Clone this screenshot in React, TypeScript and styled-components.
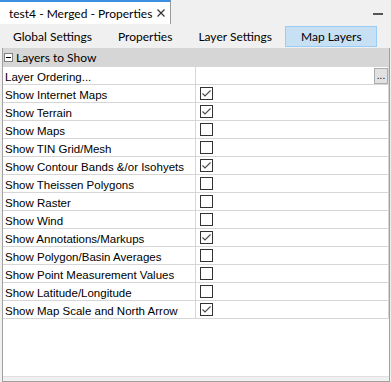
import React from 'react';
import styled, { createGlobalStyle } from 'styled-components';

interface LayerRow {
  label: string;
  checked: boolean;
}

const ROWS: LayerRow[] = [
  { label: 'Show Internet Maps', checked: true },
  { label: 'Show Terrain', checked: true },
  { label: 'Show Maps', checked: false },
  { label: 'Show TIN Grid/Mesh', checked: false },
  { label: 'Show Contour Bands &/or Isohyets', checked: true },
  { label: 'Show Theissen Polygons', checked: false },
  { label: 'Show Raster', checked: false },
  { label: 'Show Wind', checked: false },
  { label: 'Show Annotations/Markups', checked: true },
  { label: 'Show Polygon/Basin Averages', checked: false },
  { label: 'Show Point Measurement Values', checked: false },
  { label: 'Show Latitude/Longitude', checked: false },
  { label: 'Show Map Scale and North Arrow', checked: true },
];

const TOOLS = ['Global Settings', 'Properties', 'Layer Settings', 'Map Layers'];

const App: React.FC = () => {
  return (
    <>
      <GlobalStyle />
      <Window>
        <TabStrip>
          <DocTab>
            <span>test4 - Merged - Properties</span>
            <svg width="8" height="8" viewBox="0 0 8 8">
              <path d="M0.5 0.5 L7.5 7.5 M7.5 0.5 L0.5 7.5" stroke="#333" strokeWidth="1.2" />
            </svg>
          </DocTab>
          <MinimizeDash />
        </TabStrip>

        <Toolbar>
          {TOOLS.map((t) => (
            <ToolButton key={t} $active={t === 'Map Layers'}>{t}</ToolButton>
          ))}
        </Toolbar>

        <GridPanel>
          <CategoryRow>
            <Collapse />
            <span>Layers to Show</span>
          </CategoryRow>

          <Row>
            <NameCell>Layer Ordering...</NameCell>
            <ValueCell>
              <Ellipsis>...</Ellipsis>
            </ValueCell>
          </Row>

          {ROWS.map((r) => (
            <Row key={r.label}>
              <NameCell>{r.label}</NameCell>
              <ValueCell>
                <CheckBox>
                  {r.checked && (
                    <svg width="11" height="11" viewBox="0 0 11 11">
                      <path d="M1.5 5.5 L4 8 L9.5 2.5" fill="none" stroke="#4a4a4a" strokeWidth="1.1" />
                    </svg>
                  )}
                </CheckBox>
              </ValueCell>
            </Row>
          ))}

          <Filler />
          <BottomStrip />
        </GridPanel>
      </Window>
    </>
  );
};

export default App;

const GlobalStyle = createGlobalStyle`
  html, body {
    margin: 0;
    padding: 0;
    background: #f0f0f0;
  }
  * {
    box-sizing: border-box;
  }
`;

const Window = styled.div`
  width: 391px;
  height: 382px;
  display: flex;
  flex-direction: column;
  background: #f0f0f0;
  font-family: Lato, "Open Sans", sans-serif;
  color: #000;
  overflow: hidden;
`;

const TabStrip = styled.div`
  height: 24px;
  display: flex;
  align-items: stretch;
`;

const DocTab = styled.div`
  width: 171px;
  height: 24px;
  display: flex;
  align-items: center;
  gap: 5px;
  padding-left: 9px;
  background: #fff;
  border-top: 2px solid #3b8fe0;
  border-right: 1px solid #9a9a9a;
  font-size: 12px;
  white-space: nowrap;
`;

const MinimizeDash = styled.div`
  width: 10px;
  height: 2px;
  background: #555;
  margin: 13px 8px 0 auto;
`;

const Toolbar = styled.div`
  height: 24px;
  display: flex;
  align-items: center;
  padding-left: 0;
`;

const ToolButton = styled.div<{ $active?: boolean }>`
  height: 21px;
  display: flex;
  align-items: center;
  padding: 0 12px 0 12px;
  font-size: 12px;
  white-space: nowrap;
  border: 1px solid ${(p) => (p.$active ? '#99cdf5' : 'transparent')};
  background: ${(p) => (p.$active ? '#c7e0f4' : 'transparent')};

  &:last-child {
    padding: 0 14px 0 15px;
  }
`;

const GridPanel = styled.div`
  flex: 1;
  margin: 0 1px 0 2px;
  display: flex;
  flex-direction: column;
  background: #fff;
  border-left: 1px solid #a0a0a0;
  border-right: 1px solid #a0a0a0;
  border-bottom: 1px solid #a0a0a0;
  font-family: "Liberation Sans", Arial, sans-serif;
  font-size: 11.5px;
`;

const CategoryRow = styled.div`
  height: 19px;
  display: flex;
  align-items: center;
  gap: 3px;
  padding-left: 1px;
  background: #d6d6d6;
  font-family: Lato, "Open Sans", sans-serif;
  font-size: 12px;
`;

const Collapse = styled.div`
  width: 9px;
  height: 9px;
  border: 1px solid #808080;
  background: #fff;
  position: relative;
  &::after {
    content: '';
    position: absolute;
    left: 1px;
    right: 1px;
    top: 3px;
    height: 1px;
    background: #000;
  }
`;

const Row = styled.div`
  height: 18px;
  display: flex;
  border-bottom: 1px solid #d6d6d6;
  border-right: 1px solid #d6d6d6;
`;

const NameCell = styled.div`
  width: 193px;
  display: flex;
  align-items: center;
  padding: 2px 0 0 2px;
  border-right: 1px solid #d6d6d6;
  white-space: nowrap;
`;

const ValueCell = styled.div`
  flex: 1;
  display: flex;
  align-items: center;
  padding-left: 4px;
  position: relative;
`;

const CheckBox = styled.div`
  width: 13px;
  height: 13px;
  border: 1px solid #333;
  background: #fff;
  display: flex;
  align-items: center;
  justify-content: center;
`;

const Ellipsis = styled.div`
  position: absolute;
  right: 0;
  top: 1px;
  width: 14px;
  height: 16px;
  background: #e1e1e1;
  border: 1px solid #adadad;
  font-size: 10px;
  line-height: 14px;
  text-align: center;
`;

const Filler = styled.div`
  flex: 1;
`;

const BottomStrip = styled.div`
  height: 5px;
  background: #f0f0f0;
  border-top: 1px solid #e0e0e0;
`;
